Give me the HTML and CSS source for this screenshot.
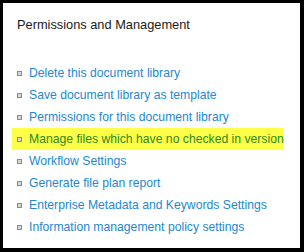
FILE: index.html
```html
<!DOCTYPE html>
<html lang="en">
<head>
  <meta charset="UTF-8">
  <title>Permissions and Management</title>
  <link rel="stylesheet" href="styles.css">
</head>
<body>
  <div class="panel">
    <h2 class="panel-title">Permissions and Management</h2>
    <ul class="link-list">
      <li><a href="#">Delete this document library</a></li>
      <li><a href="#">Save document library as template</a></li>
      <li><a href="#">Permissions for this document library</a></li>
      <li class="highlight"><a href="#">Manage files which have no checked in version</a></li>
      <li><a href="#">Workflow Settings</a></li>
      <li><a href="#">Generate file plan report</a></li>
      <li><a href="#">Enterprise Metadata and Keywords Settings</a></li>
      <li><a href="#">Information management policy settings</a></li>
    </ul>
  </div>
</body>
</html>
```

FILE: styles.css
```css
body {
  margin: 0;
  background-color: #000;
  font-family: Arial, "Liberation Sans", sans-serif;
}
.panel {
  width: 297px;
  height: 245px;
  margin: 3px 4px 4px 3px;
  background-color: #fff;
  box-sizing: border-box;
  padding: 14px 0 0 14px;
}
.panel-title {
  margin: 0;
  font-size: 12.8px;
  font-weight: normal;
  color: #1a1a1a;
}
.link-list {
  list-style: none;
  margin: 30px 0 0 0;
  padding: 0;
}
.link-list li {
  display: flex;
  align-items: center;
  height: 22px;
  margin-left: -5px;
  padding-left: 5px;
  width: 267px;
}
.link-list li::before {
  content: "";
  width: 3px;
  height: 3px;
  border: 1px solid #8a8a8a;
  background-color: #d8d8d8;
  margin-right: 7px;
  flex-shrink: 0;
}
.link-list a {
  color: #2388cf;
  text-decoration: none;
  font-size: 12.2px;
  white-space: nowrap;
}
.link-list li.highlight {
  background-color: #ffff47;
}
.link-list li.highlight a {
  color: #2c8a22;
}
```
